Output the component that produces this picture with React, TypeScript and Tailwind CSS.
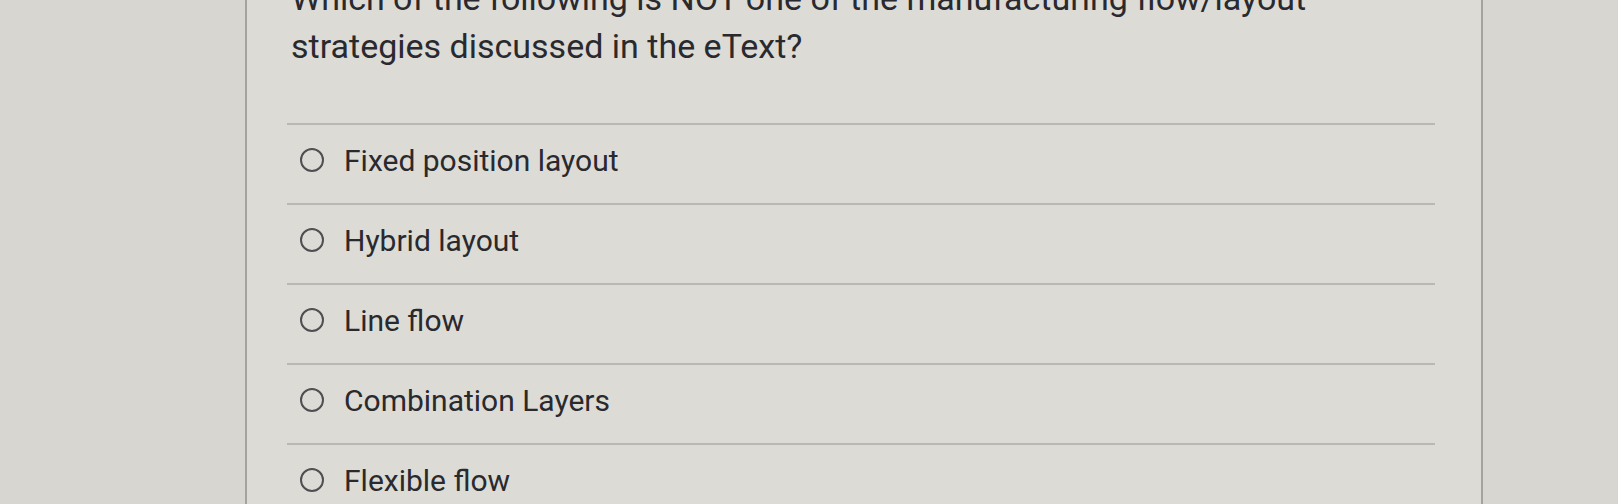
import React from "react";

const options = [
  "Fixed position layout",
  "Hybrid layout",
  "Line flow",
  "Combination Layers",
  "Flexible flow",
];

export default function App() {
  return (
    <div
      className="flex h-[504px] w-[1618px] overflow-hidden bg-[#d8d6d0] text-[#29292e]"
      style={{ fontFamily: "Roboto, 'Liberation Sans', sans-serif" }}
    >
      <div className="w-[245px] shrink-0" />
      <div className="w-[1238px] shrink-0 border-x-2 border-[#a3a3a0] bg-[#dcdbd6]">
        <div className="ml-[40px] w-[1148px]">
          <div className="-mt-[26px] pl-[4px] text-[34px] leading-[48px]">
            <div className="whitespace-nowrap">
              Which of the following is NOT one of the manufacturing flow/layout
            </div>
            <div className="whitespace-nowrap">strategies discussed in the eText?</div>
          </div>
          <div className="mt-[53px]">
            {options.map((o) => (
              <div
                key={o}
                className="flex h-[80px] items-start border-t-2 border-[#b9b8b3] pt-[23px]"
              >
                <div className="ml-[13px] h-[24px] w-[24px] shrink-0 rounded-full border-[2.5px] border-[#4f4f52]" />
                <div className="ml-[20px] -mt-[5px] whitespace-nowrap text-[30px] leading-[36px]">
                  {o}
                </div>
              </div>
            ))}
          </div>
        </div>
      </div>
      <div className="flex-1" />
    </div>
  );
}
